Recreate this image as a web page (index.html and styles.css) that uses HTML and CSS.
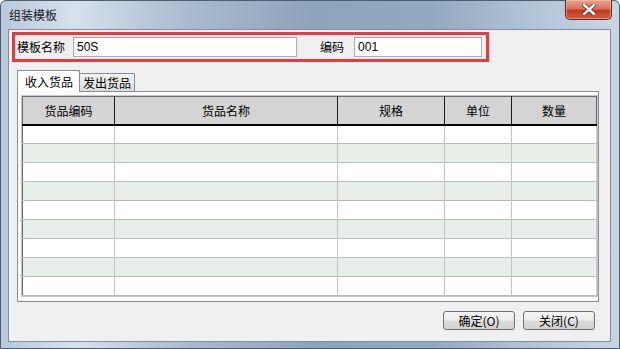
FILE: index.html
```html
<!DOCTYPE html>
<html lang="zh-CN">
<head>
    <meta charset="UTF-8">
    <title>组装模板</title>
    <link rel="stylesheet" href="styles.css">
</head>
<body>
    <div class="window">
        <div class="titlebar">
            <span class="title">组装模板</span>
            <button class="close-btn">
                <svg width="14" height="11" viewBox="0 0 14 11">
                    <path d="M2 1 L12 10 M12 1 L2 10" stroke="#6a2a20" stroke-width="4" stroke-linecap="square"/>
                    <path d="M2 1 L12 10 M12 1 L2 10" stroke="#ffffff" stroke-width="2.4" stroke-linecap="square"/>
                </svg>
            </button>
        </div>

        <div class="client">
            <div class="head-box">
                <label class="field-label">模板名称</label>
                <input type="text" class="field-input name-input" value="50S">
                <label class="field-label code-label">编码</label>
                <input type="text" class="field-input code-input" value="001">
            </div>

            <div class="tabs">
                <div class="tab active">收入货品</div>
                <div class="tab">发出货品</div>
            </div>

            <div class="tab-panel">
                <table class="grid">
                    <thead>
                        <tr>
                            <th class="c1">货品编码</th>
                            <th class="c2">货品名称</th>
                            <th class="c3">规格</th>
                            <th class="c4">单位</th>
                            <th class="c5">数量</th>
                        </tr>
                    </thead>
                    <tbody>
                        <tr><td></td><td></td><td></td><td></td><td></td></tr>
                        <tr class="alt"><td></td><td></td><td></td><td></td><td></td></tr>
                        <tr><td></td><td></td><td></td><td></td><td></td></tr>
                        <tr class="alt"><td></td><td></td><td></td><td></td><td></td></tr>
                        <tr><td></td><td></td><td></td><td></td><td></td></tr>
                        <tr class="alt"><td></td><td></td><td></td><td></td><td></td></tr>
                        <tr><td></td><td></td><td></td><td></td><td></td></tr>
                        <tr class="alt"><td></td><td></td><td></td><td></td><td></td></tr>
                        <tr><td></td><td></td><td></td><td></td><td></td></tr>
                    </tbody>
                </table>
            </div>

            <div class="actions">
                <button class="btn">确定(O)</button>
                <button class="btn">关闭(C)</button>
            </div>
        </div>
    </div>
</body>
</html>
```

FILE: styles.css
```css
* {
    box-sizing: border-box;
}

body {
    margin: 0;
    width: 620px;
    height: 349px;
    overflow: hidden;
    font-family: "Noto Sans CJK SC", "Liberation Sans", sans-serif;
    font-size: 12px;
    color: #000;
    background: #ffffff;
}

.window {
    width: 620px;
    height: 349px;
    border: 1px solid #4f5f73;
    border-radius: 6px 6px 0 0;
    background: linear-gradient(to right, #b9c9db 0%, #d6e1ec 12%, #a9bbcf 30%, #8ea4bc 50%, #93a9c1 70%, #b6c7d9 88%, #c8d5e3 100%);
    display: flex;
    flex-direction: column;
}

.titlebar {
    height: 28px;
    display: flex;
    align-items: flex-start;
}

.title {
    padding: 6px 0 0 8px;
    font-size: 12px;
    line-height: 16px;
    color: #1a1a1a;
}

.close-btn {
    margin-left: auto;
    margin-right: 7px;
    width: 47px;
    height: 20px;
    margin-top: -1px;
    border: 1px solid #5a2a22;
    border-top: none;
    border-radius: 0 0 5px 5px;
    background: linear-gradient(to bottom, #e9a393 0%, #d9725c 45%, #c23a22 55%, #d35a3e 100%);
    box-shadow: inset 0 0 0 1px rgba(255, 200, 190, 0.5);
    display: flex;
    align-items: center;
    justify-content: center;
    padding: 0;
}

.client {
    margin: 0 8px 6px 7px;
    flex: 1;
    background: #f0f0f0;
    border: 1px solid #7e8fa3;
    display: flex;
    flex-direction: column;
    padding: 2px 0 0 3px;
}

.head-box {
    width: 477px;
    height: 30px;
    border: 3px solid #e83a3f;
    display: flex;
    align-items: center;
    padding-left: 2px;
}

.field-label {
    line-height: 16px;
}

.field-input {
    height: 20px;
    border: 1px solid #abadb3;
    border-top-color: #9ea2aa;
    background: #ffffff;
    font-family: "Liberation Sans", "Noto Sans CJK SC", sans-serif;
    font-size: 12px;
    padding: 0 3px;
    outline: none;
}

.name-input {
    width: 224px;
    margin-left: 8px;
}

.code-label {
    margin-left: 23px;
}

.code-input {
    width: 128px;
    margin-left: 10px;
}

.tabs {
    display: flex;
    align-items: flex-end;
    margin: 8px 0 0 5px;
    height: 21px;
    position: relative;
    z-index: 1;
}

.tab {
    height: 18px;
    padding: 0 3px;
    border: 1px solid #898c95;
    border-bottom: none;
    background: linear-gradient(to bottom, #f2f2f2, #dcdcdc);
    line-height: 17px;
    font-size: 12px;
}

.tab.active {
    width: 63px;
    height: 22px;
    padding: 2px 0 0 7px;
    background: #ffffff;
    margin-bottom: -1px;
}

.tab + .tab {
    border-left: none;
}

.tab-panel {
    width: 582px;
    height: 211px;
    margin-left: 5px;
    border: 1px solid #898c95;
    background: #ffffff;
    padding: 4px 2px 0 4px;
}

.grid {
    width: 574px;
    border-collapse: collapse;
    table-layout: fixed;
    border: 1px solid #6c6c6c;
    box-shadow: 0 0 0 1px #c8c8c8;
}

.grid th {
    height: 28px;
    background: #d4d4d4;
    font-weight: normal;
    border-right: 1px solid #1a1a1a;
    border-bottom: 2px solid #000;
    text-align: center;
    padding: 0;
}

.grid th:last-child {
    border-right: 1px solid #6c6c6c;
}

.c1 { width: 92px; }
.c2 { width: 223px; }
.c3 { width: 107px; }
.c4 { width: 67px; }
.c5 { width: 85px; }

.grid td {
    height: 19px;
    padding: 0;
    border-right: 1px solid #c4c4c4;
    border-bottom: 1px solid #b9bdb9;
    background: #ffffff;
}

.grid tr.alt td {
    background: #e8eee8;
}

.actions {
    display: flex;
    justify-content: flex-end;
    gap: 8px;
    margin-top: 9px;
    padding-right: 15px;
}

.btn {
    width: 72px;
    height: 19px;
    border: 1px solid #707070;
    border-radius: 3px;
    background: linear-gradient(to bottom, #f4f4f4 0%, #ececec 48%, #dcdcdc 52%, #d0d0d0 100%);
    font-family: "Noto Sans CJK SC", "Liberation Sans", sans-serif;
    font-size: 12px;
    line-height: 15px;
    padding: 0;
    color: #000;
}
```
